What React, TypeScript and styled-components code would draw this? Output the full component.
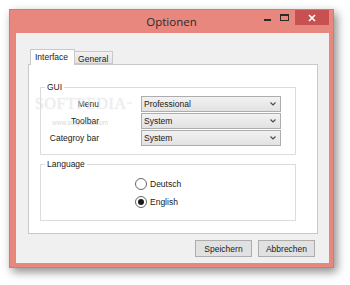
import React from 'react'
import styled, { createGlobalStyle } from 'styled-components'

const GlobalStyle = createGlobalStyle`
  html, body {
    margin: 0;
    padding: 0;
    background: #ffffff;
  }
  body {
    font-family: 'Liberation Sans', Arial, sans-serif;
    font-size: 8.5px;
    color: #1a1a1a;
  }
  * {
    box-sizing: border-box;
  }
`

const App = () => {
  return (
    <Page>
      <GlobalStyle />
      <Window>
        <TitleBar>
          <span />
          <Title>Optionen</Title>
          <Controls>
            <CaptionButton>
              <svg width="8" height="8" viewBox="0 0 8 8">
                <rect x="0" y="5" width="7" height="2" fill="#2b2b2b" />
              </svg>
            </CaptionButton>
            <CaptionButton>
              <svg width="9" height="8" viewBox="0 0 9 8">
                <rect x="0.5" y="0.5" width="8" height="6" fill="none" stroke="#2b2b2b" />
                <rect x="0.5" y="0.5" width="8" height="1.5" fill="#2b2b2b" />
              </svg>
            </CaptionButton>
            <CloseButton>
              <svg width="8" height="8" viewBox="0 0 8 8">
                <path d="M1 1 L7 7 M7 1 L1 7" stroke="#ffffff" strokeWidth="1.6" />
              </svg>
            </CloseButton>
          </Controls>
        </TitleBar>
        <Client>
          <TabStrip>
            <Tab active>Interface</Tab>
            <Tab>General</Tab>
          </TabStrip>
          <TabPage>
            <Group>
              <Legend>GUI</Legend>
              <Rows>
                <Label>Menu</Label>
                <Combo>
                  <span>Professional</span>
                  <Chevron />
                </Combo>
                <Label>Toolbar</Label>
                <Combo>
                  <span>System</span>
                  <Chevron />
                </Combo>
                <Label>Categroy bar</Label>
                <Combo>
                  <span>System</span>
                  <Chevron />
                </Combo>
              </Rows>
            </Group>
            <LangGroup>
              <Legend>Language</Legend>
              <Radios>
                <RadioRow>
                  <Radio />
                  <span>Deutsch</span>
                </RadioRow>
                <RadioRow>
                  <Radio checked />
                  <span>English</span>
                </RadioRow>
              </Radios>
            </LangGroup>
          </TabPage>
          <Buttons>
            <Button>Speichern</Button>
            <Button>Abbrechen</Button>
          </Buttons>
        </Client>
      </Window>
      <Watermark>
        SOFTPEDIA<sup>™</sup>
        <small>www.softpedia.com</small>
      </Watermark>
    </Page>
  )
}

const Chevron = () => (
  <svg width="6" height="4" viewBox="0 0 6 4">
    <path d="M0.5 0.5 L3 3 L5.5 0.5" fill="none" stroke="#4a4a4a" strokeWidth="1.1" />
  </svg>
)

const Page = styled.div`
  position: relative;
  width: 350px;
  height: 285px;
  padding: 9px 0 0 9px;
  overflow: hidden;
`

const Window = styled.div`
  width: 325px;
  height: 259px;
  display: flex;
  flex-direction: column;
  background: #e8877e;
  border: 1px solid #d9776f;
  box-shadow: 3px 4px 9px rgba(0, 0, 0, 0.45);
`

const TitleBar = styled.div`
  height: 23px;
  display: grid;
  grid-template-columns: 1fr auto 1fr;
  align-items: start;
`

const Title = styled.div`
  padding-top: 5px;
  font-family: 'Open Sans', 'Liberation Sans', sans-serif;
  font-size: 11.5px;
  line-height: 14px;
  color: #2a2a2a;
`

const Controls = styled.div`
  justify-self: end;
  display: flex;
  margin-right: 4px;
`

const CaptionButton = styled.div`
  width: 17px;
  height: 15px;
  display: flex;
  align-items: center;
  justify-content: center;
`

const CloseButton = styled(CaptionButton)`
  width: 34px;
  margin-left: 2px;
  background: #c75050;
`

const Client = styled.div`
  flex: 1;
  margin: 0 4px 4px 6px;
  padding: 16px 11px 0 12px;
  background: #f0f0f0;
  display: flex;
  flex-direction: column;
`

const TabStrip = styled.div`
  display: flex;
  align-items: flex-end;
  height: 15px;
  padding-left: 2px;
  position: relative;
  z-index: 1;
`

const Tab = styled.div<{ active?: boolean }>`
  height: ${p => (p.active ? '16px' : '13px')};
  margin-bottom: ${p => (p.active ? '-1px' : '0')};
  padding: ${p => (p.active ? '2px 6px 0 4px' : '2px 4px 0 3px')};
  border: 1px solid #c9c9c9;
  border-bottom: ${p => (p.active ? 'none' : '1px solid #c9c9c9')};
  border-left: ${p => (p.active ? '1px solid #c9c9c9' : 'none')};
  background: ${p => (p.active ? '#ffffff' : 'linear-gradient(#f2f2f2, #e3e3e3)')};
  line-height: 10px;
`

const TabPage = styled.div`
  height: 170px;
  background: #ffffff;
  border: 1px solid #c9c9c9;
  padding: 17px 21px 0 11px;
`

const Group = styled.fieldset`
  margin: 0;
  padding: 4px 13px 8px 0;
  border: 1px solid #dcdcdc;
  min-width: 0;
`

const LangGroup = styled(Group)`
  margin-top: 4px;
  padding: 9px 0 12px 0;
`

const Legend = styled.legend`
  margin-left: 4px;
  padding: 0 2px;
  line-height: 10px;
  font-size: 8.5px;
`

const Rows = styled.div`
  display: grid;
  grid-template-columns: 58px 140px;
  column-gap: 42px;
  row-gap: 1px;
  align-items: center;
`

const Label = styled.div`
  text-align: right;
  line-height: 16px;
`

const Combo = styled.div`
  height: 16px;
  display: flex;
  align-items: center;
  justify-content: space-between;
  padding: 0 4px 0 2px;
  border: 1px solid #adadad;
  background: linear-gradient(#f2f2f2, #e2e2e2);
`

const Radios = styled.div`
  display: flex;
  flex-direction: column;
  gap: 6px;
  padding-left: 94px;
`

const RadioRow = styled.div`
  display: flex;
  align-items: center;
  gap: 3px;
  height: 12px;
`

const Radio = styled.div<{ checked?: boolean }>`
  width: 12px;
  height: 12px;
  border-radius: 50%;
  border: 1px solid #666666;
  background: #ffffff;
  display: flex;
  align-items: center;
  justify-content: center;
  &::after {
    content: '';
    display: ${p => (p.checked ? 'block' : 'none')};
    width: 6px;
    height: 6px;
    border-radius: 50%;
    background: #1a1a1a;
  }
`

const Buttons = styled.div`
  display: flex;
  justify-content: flex-end;
  gap: 6px;
  margin-top: 6px;
  padding-right: 3px;
`

const Button = styled.div`
  width: 57px;
  height: 17px;
  display: flex;
  align-items: center;
  justify-content: center;
  border: 1px solid #adadad;
  background: #e1e1e1;
`

const Watermark = styled.div`
  position: absolute;
  left: 35px;
  top: 96px;
  font-family: 'Liberation Serif', serif;
  font-size: 16px;
  line-height: 15px;
  letter-spacing: 0.6px;
  color: rgba(255, 255, 255, 0.5);
  text-shadow: 0 0 1px rgba(120, 120, 120, 0.3);
  pointer-events: none;
  sup {
    font-size: 5px;
    vertical-align: top;
  }
  small {
    display: block;
    margin: 8px 0 0 17px;
    font-family: 'Liberation Sans', sans-serif;
    font-size: 6.5px;
    line-height: 8px;
    letter-spacing: 0;
    color: rgba(160, 160, 160, 0.45);
    text-shadow: none;
  }
`

export default App
